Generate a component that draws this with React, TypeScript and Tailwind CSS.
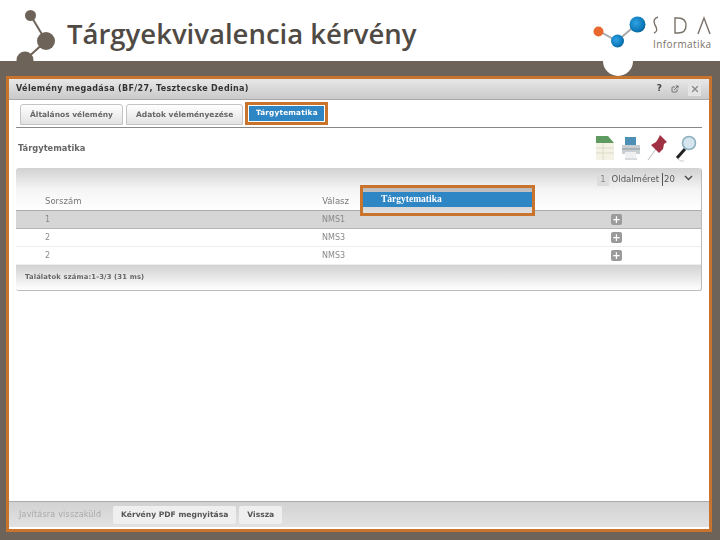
import { ExternalLink, X } from "lucide-react";

const font = "font-['DejaVu_Sans',sans-serif]";

const LeftLogo = () => (
  <svg className="absolute left-0 top-0" width="70" height="70" viewBox="0 0 70 70">
    <path d="M31 16 L46 41 L25 60" stroke="#6e6358" strokeWidth="2" fill="none" />
    <circle cx="30.5" cy="15.5" r="5.5" fill="#6e6358" />
    <circle cx="46" cy="41" r="9" fill="#6e6358" />
    <circle cx="25" cy="60" r="8.5" fill="#6e6358" />
  </svg>
);

const RightLogo = () => (
  <svg className="absolute left-[590px] top-0" width="130" height="80" viewBox="0 0 130 80">
    <defs>
      <radialGradient id="ball" cx="0.4" cy="0.4" r="0.65">
        <stop offset="0" stopColor="#2fa3e6" />
        <stop offset="0.75" stopColor="#0d78b8" />
        <stop offset="1" stopColor="#0a5f95" />
      </radialGradient>
    </defs>
    <path d="M9 31 L27 41 L47 24" stroke="#a9a9ad" strokeWidth="2" fill="none" />
    <circle cx="8.5" cy="31.5" r="5" fill="#e8682f" />
    <circle cx="27.5" cy="41" r="6.5" fill="url(#ball)" />
    <circle cx="47.5" cy="24.5" r="8" fill="url(#ball)" />
    <path d="M68 17 Q62 19 65 25 Q69 31 64 33" stroke="#7a7268" strokeWidth="1.4" fill="none" />
    <path d="M85 18 V33 H88 Q96 33 96 25.5 Q96 18 88 18 Z" stroke="#7a7268" strokeWidth="1.4" fill="none" />
    <path d="M108 34 L114 18 L120 34" stroke="#7a7268" strokeWidth="1.4" fill="none" />
    <path d="M13 61 A15 15 0 0 0 43 61 Z" fill="#fff" />
  </svg>
);

const XlsIcon = () => (
  <svg width="20" height="26" viewBox="0 0 20 26">
    <path d="M1 1 H13 L19 8 V25 H1 Z" fill="#f3f2e4" />
    <path d="M1 1 H13 L19 8 H1 Z" fill="#5f9a60" />
    <path d="M1 13 H19 M1 18 H19 M8 8 V25" stroke="#d9dcc4" strokeWidth="1" />
  </svg>
);

const PrintIcon = () => (
  <svg width="20" height="26" viewBox="0 0 20 26">
    <path d="M4 2 H15 V10 H4 Z" fill="#4d8fb5" />
    <path d="M1 10 H19 V19 H1 Z" fill="#c9ced2" />
    <path d="M1 14 H19" stroke="#8d979d" strokeWidth="1" />
    <path d="M4 17 H15 V23 H4 Z" fill="#eef0f1" />
    <path d="M4 24 H16" stroke="#d8dcdf" strokeWidth="2" />
  </svg>
);

const PinIcon = () => (
  <svg width="22" height="28" viewBox="0 0 22 28">
    <path d="M1 26 L9 15" stroke="#c9c9c9" strokeWidth="1.2" />
    <path d="M13 1 L20 8 L17 10 L16 15 L12 19 L4 11 L9 8 L11 5 Z" fill="#a13244" />
  </svg>
);

const SearchIcon = () => (
  <svg width="22" height="28" viewBox="0 0 22 28">
    <path d="M10 15 L2 24" stroke="#222" strokeWidth="3" />
    <circle cx="14" cy="9" r="6.5" fill="#d5e6ee" stroke="#8fb0c0" strokeWidth="1.6" />
    <path d="M3 25 Q6 28 9 27" stroke="#ccc" strokeWidth="1" fill="none" />
  </svg>
);

const PlusBtn = () => (
  <div className="flex h-[11px] w-[11px] items-center justify-center rounded-[2px] bg-[#9a9a9a] text-[10px] leading-none font-bold text-white">
    +
  </div>
);

const Row = ({ n, answer, selected }: { n: string; answer: string; selected?: boolean }) => (
  <div className={`flex h-[18px] items-center border-b text-[8px] text-[#8a8a8a] ${selected ? "border-[#b5b5b5] bg-[#d6d6d6]" : "border-[#eeeeee] bg-white"}`}>
    <div className="w-[306px] pl-[29px]">{n}</div>
    <div className="w-[289px]">{answer}</div>
    <PlusBtn />
  </div>
);

const Tab = ({ label }: { label: string }) => (
  <div className="flex h-[21px] items-center rounded-t-[3px] border border-[#c4c4c4] bg-gradient-to-b from-white to-[#e2e2e2] px-[9px] text-[7.5px] font-bold text-[#666]">
    {label}
  </div>
);

export default function App() {
  return (
    <div className={`relative flex h-[540px] w-[720px] flex-col overflow-hidden bg-[#6e6358] ${font}`}>
      <div className="flex h-[61px] items-center bg-white pt-[7px] pl-[67px]">
        <h1 className="font-['Open_Sans',sans-serif] text-[27.5px] font-semibold text-[#504a45]">Tárgyekvivalencia kérvény</h1>
      </div>
      <LeftLogo />
      <RightLogo />
      <div className="absolute left-[653px] top-[38px] font-['Open_Sans',sans-serif] text-[10px] leading-[12px] tracking-[0.4px] text-[#7a7268]">Informatika</div>

      <div className="mt-[15px] ml-[6px] flex h-[456px] w-[706px] flex-col border-[3px] border-[#c8742c] bg-white blur-[0.35px]">
        <div className="flex h-[21px] items-center justify-between border-b border-[#aaa] bg-gradient-to-b from-[#e8e8e8] to-[#c9c9c9] px-[7px]">
          <span className="text-[8px] font-bold tracking-[0.35px] text-[#333]">Vélemény megadása (BF/27, Tesztecske Dedina)</span>
          <div className="flex items-center gap-[9px] pr-[1px] text-[9px] font-bold text-[#444]">
            <span>?</span>
            <ExternalLink size={8} strokeWidth={2} />
            <span className="flex h-[13px] w-[13px] items-center justify-center bg-[#e4e4e4] text-[#888]">
              <X size={10} strokeWidth={3} />
            </span>
          </div>
        </div>

        <div className="relative mx-[7px] flex h-[28px] items-end gap-[3px] border-b border-[#888] pb-[2px] pl-[4px]">
          <Tab label="Általános vélemény" />
          <Tab label="Adatok véleményezése" />
          <div className="ml-[-1px] border-[3px] border-[#c8742c] bg-white p-[1px]">
            <div className="flex h-[15px] items-center bg-[#2f86c5] px-[6.5px] text-[7.3px] font-bold tracking-[0.2px] text-white">Tárgytematika</div>
          </div>
        </div>

        <div className="mx-[7px] flex h-[40px] items-center justify-between pr-[5px] pl-[2px]">
          <span className="text-[8.3px] font-bold text-[#666]">Tárgytematika</span>
          <div className="flex items-center gap-[6px]">
            <XlsIcon />
            <PrintIcon />
            <PinIcon />
            <SearchIcon />
          </div>
        </div>

        <div className="relative mx-[7px] flex flex-col rounded-[3px] border-r border-b border-[#bbb]">
          <div className="flex h-[43px] justify-between rounded-t-[3px] border-b border-[#aaa] bg-gradient-to-b from-[#d2d2d2] via-[#f4f4f4] to-white">
            <div className="flex w-[333px] items-end justify-between pb-[2px] pl-[29px] text-[8.5px] text-[#777]">
              <span>Sorszám</span>
              <span>Válasz</span>
            </div>
            <div className="flex items-start gap-[3px] pt-[5px] pr-[8px] text-[8.5px] text-[#555]">
              <span className="bg-[#ddd] px-[3px] text-[#888]">1</span>
              <span>Oldalméret</span>
              <span className="flex w-[31px] justify-between border-l border-[#555] pl-[1px]">
                20
                <svg width="9" height="10" viewBox="0 0 9 10">
                  <path d="M1 3 L4.5 6.5 L8 3" stroke="#444" strokeWidth="1.3" fill="none" />
                </svg>
              </span>
            </div>
          </div>
          <Row n="1" answer="NMS1" selected />
          <Row n="2" answer="NMS3" />
          <Row n="2" answer="NMS3" />
          <div className="flex h-[25px] items-center rounded-b-[3px] bg-gradient-to-b from-[#d2d2d2] to-white pl-[9px] text-[6.8px] font-bold tracking-[0.15px] text-[#666]">
            Találatok száma:1-3/3 (31 ms)
          </div>

          <div className="absolute left-[344px] top-[17px] h-[31px] w-[175px] border-[3px] border-[#c8742c] bg-gradient-to-b from-[#bbb] to-[#e0e0e0] pt-[4px]">
            <div className="flex h-[15px] items-center bg-[#2f86c5] pl-[18px] font-['Liberation_Serif',serif] text-[9.5px] font-bold text-white">Tárgytematika</div>
          </div>
        </div>

        <div className="flex-1" />

        <div className="flex h-[28px] items-center gap-[3px] border-t border-b-2 border-t-[#aaa] border-b-white bg-gradient-to-b from-[#d2d2d2] to-[#e2e2e2] pl-[10px] text-[8px] tracking-[0.2px]">
          <span className="w-[91px] text-[#aaa]">Javításra visszaküld</span>
          <span className="flex h-[18px] items-center rounded-[2px] bg-[#efefef] px-[8px] text-[7.6px] font-bold tracking-normal text-[#555]">Kérvény PDF megnyitása</span>
          <span className="flex h-[18px] items-center rounded-[2px] bg-[#efefef] px-[8px] text-[7.6px] font-bold tracking-normal text-[#555]">Vissza</span>
        </div>
      </div>
    </div>
  );
}
